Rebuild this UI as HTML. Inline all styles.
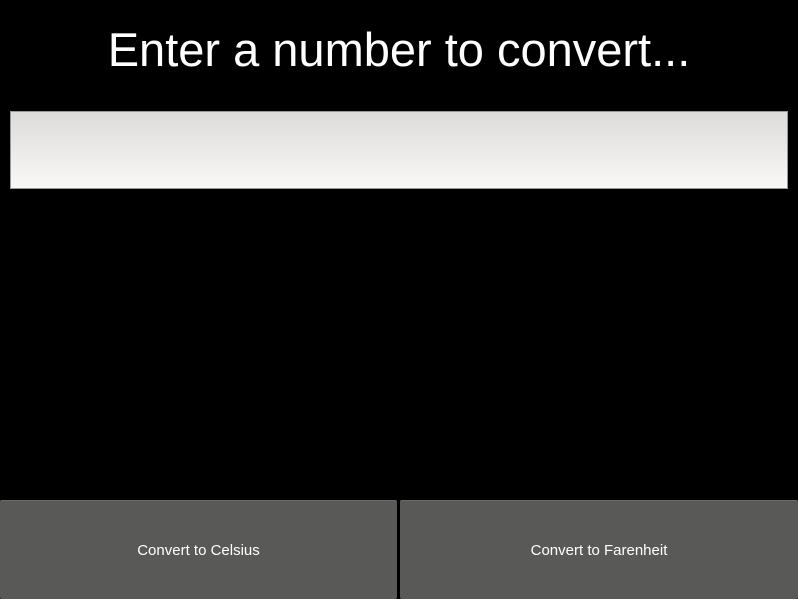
<!DOCTYPE html>
<html><head><style>
body{margin:0;width:798px;height:599px;background:#000;overflow:hidden;font-family:"Liberation Sans",sans-serif;position:relative}
h1{position:absolute;top:21px;left:0;width:798px;margin:0;text-align:center;color:#fff;font-weight:normal;font-size:47px;line-height:58px}
.in{position:absolute;left:10px;top:111px;width:776px;height:76px;border:1px solid #999;background:linear-gradient(#dcdbda,#f9f8f7)}
.b{position:absolute;top:500px;height:98px;background:#595957;border-top:1px solid #6a6a68;color:#fff;font-size:15px;display:flex;align-items:center;justify-content:center;border-radius:2px}
</style></head><body>
<h1>Enter a number to convert...</h1>
<div class="in"></div>
<div class="b" style="left:0;width:397px">Convert to Celsius</div>
<div class="b" style="left:400px;width:398px">Convert to Farenheit</div>
</body></html>
